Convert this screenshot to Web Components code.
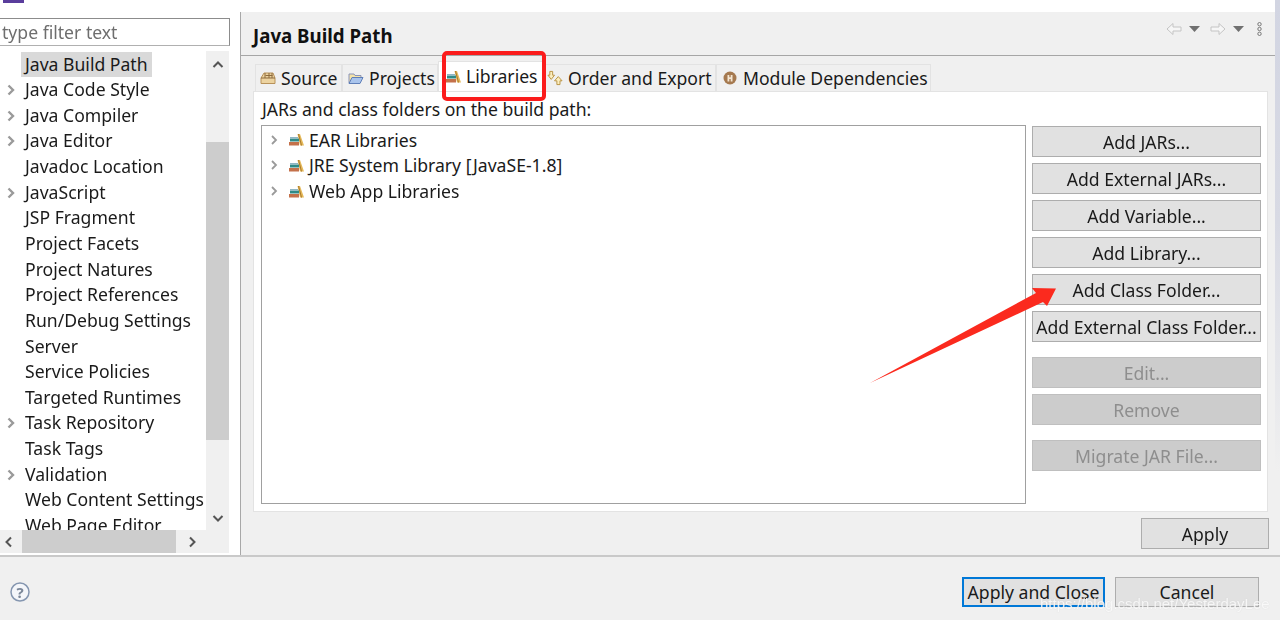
<!DOCTYPE html>
<html>
<head>
<meta charset="utf-8">
<title>Java Build Path</title>
<style>
html, body { margin: 0; padding: 0; background: #fff; }
body { width: 1280px; height: 620px; overflow: hidden; position: relative; font: 17.6px "Noto Sans", "Open Sans", sans-serif; color: #1a1a1a; }
</style>
</head>
<body>
<prefs-dialog>
  <prefs-sidebar slot="side">
    <tree-row>Java Build Path</tree-row>
    <tree-row arrow>Java Code Style</tree-row>
    <tree-row arrow>Java Compiler</tree-row>
    <tree-row arrow>Java Editor</tree-row>
    <tree-row>Javadoc Location</tree-row>
    <tree-row arrow>JavaScript</tree-row>
    <tree-row>JSP Fragment</tree-row>
    <tree-row>Project Facets</tree-row>
    <tree-row>Project Natures</tree-row>
    <tree-row>Project References</tree-row>
    <tree-row>Run/Debug Settings</tree-row>
    <tree-row>Server</tree-row>
    <tree-row>Service Policies</tree-row>
    <tree-row>Targeted Runtimes</tree-row>
    <tree-row arrow>Task Repository</tree-row>
    <tree-row>Task Tags</tree-row>
    <tree-row arrow>Validation</tree-row>
    <tree-row>Web Content Settings</tree-row>
    <tree-row>Web Page Editor</tree-row>
  </prefs-sidebar>
  <build-path-page slot="main"></build-path-page>
  <dialog-footer slot="footer"></dialog-footer>
</prefs-dialog>
<markup-layer></markup-layer>

<script>
const ICONS = {
  source: `<svg width="16" height="14" viewBox="0 0 16 14"><path d="M1 7 4 2h9l2 5v5.500H1z" fill="#ecd3a0" stroke="#b8925a"/><path d="M5 2v5M9 2v5M12 2v5M1 7h14M5.500 4.500h7" stroke="#8d6a3c" fill="none"/></svg>`,
  folder: `<svg width="16" height="14" viewBox="0 0 16 14"><path d="M1 12V3h5l1 1.500h6V7" fill="#f4e3a8" stroke="#8a94b8"/><path d="M1 12.500 4 6.500h11l-3 6z" fill="#a9c4ec" stroke="#5f7fb8"/></svg>`,
  lib: `<svg width="15" height="13" viewBox="0 0 15 13"><path d="M8.500 1 11 1 15 12.500H11z" fill="#e5b95a"/><path d="M9.500 1 12.500 12.500" stroke="#a9792c" fill="none"/><rect x="0" y="9" width="10" height="3.500" fill="#c4714a"/><rect x="1" y="5.500" width="9" height="3" fill="#2f8a86"/><rect x="1" y="4" width="8" height="1.500" fill="#8fb6c4"/></svg>`,
  order: `<svg width="17" height="16" viewBox="0 0 17 16"><path d="M3 1h3v4h2L4.500 9.500 1 5h2z" fill="#fbeec0" stroke="#b8913f"/><path d="M12 6.500 16 11h-2.200v4h-3.300v-4H8z" fill="#fbeec0" stroke="#b8913f"/></svg>`,
  module: `<svg width="14" height="14" viewBox="0 0 14 14"><circle cx="7" cy="7" r="6.500" fill="#a5794f"/><path d="M4.500 10.500V4h1.800v2.300h1.400V4h1.800v6.500H7.700V8H6.300v2.500z" fill="#f3e6d3"/></svg>`
};
const CHEVRON = (d, c, w) => `<svg width="12" height="12" viewBox="0 0 12 12"><path d="${d}" fill="none" stroke="${c}" stroke-width="${w}"/></svg>`;

class PrefsDialog extends HTMLElement {
  constructor() {
    super();
    this.attachShadow({ mode: 'open' }).innerHTML = `
      <style>
        :host { display: flex; flex-direction: column; width: 1280px; height: 620px; filter: blur(.35px); }
        .top { display: flex; flex: none; height: 555px; }
        .left { width: 1275px; flex: none; display: flex; flex-direction: column; }
        .strip { height: 12px; flex: none; }
        .strip i { display: block; width: 21px; height: 3px; margin-left: 3px; background: #5a3d9c; }
        .body { display: flex; height: 543px; flex: none; }
        .edge { width: 5px; flex: none; background: linear-gradient(#d2d5e2, #d8dae4 40%, #f0f0f0 85%); }
      </style>
      <div class="top">
        <div class="left">
          <div class="strip"><i></i></div>
          <div class="body">
            <slot name="side"></slot>
            <slot name="main"></slot>
          </div>
        </div>
        <div class="edge"></div>
      </div>
      <slot name="footer"></slot>`;
  }
}

class PrefsSidebar extends HTMLElement {
  constructor() {
    super();
    this.attachShadow({ mode: 'open' }).innerHTML = `
      <style>
        :host { display: block; width: 240px; flex: none; box-sizing: border-box; padding-top: 6px; }
        .filter { width: 230px; height: 28px; box-sizing: border-box; border: 1px solid #8c8c8c; border-bottom-color: #b0b0b0; border-left: none; padding-left: 2px; color: #6e6e6e; line-height: 27px; white-space: nowrap; }
        .grid { display: grid; grid-template-columns: 206px 23px; grid-template-rows: 479px 23px; margin-top: 5px; }
        .tree { overflow: hidden; padding-top: .5px; }
        .vbar { background: #f0f0f0; display: flex; flex-direction: column; align-items: center; }
        .vbar .cap { height: 28px; display: flex; align-items: center; justify-content: center; flex: none; }
        .vbar .pad { height: 63px; flex: none; }
        .vbar .thumb { height: 298px; width: 100%; background: #cdcdcd; flex: none; }
        .vbar .cap.down { margin-top: 71px; height: 13px; }
        .hbar { background: #f0f0f0; display: flex; align-items: center; }
        .hbar .cap { width: 22px; display: flex; justify-content: center; flex: none; }
        .hbar .cap.left { box-sizing: border-box; padding-right: 4px; }
        .hbar .thumb { width: 154px; height: 100%; background: #cdcdcd; flex: none; }
        .hbar .right { margin-left: 5px; }
        .corner { background: #f0f0f0; }
      </style>
      <div class="filter">type filter text</div>
      <div class="grid">
        <div class="tree"><slot></slot></div>
        <div class="vbar">
          <div class="cap">${CHEVRON('M1.500 8 6 3.500 10.500 8', '#555', 2)}</div>
          <div class="pad"></div>
          <div class="thumb"></div>
          <div class="cap down">${CHEVRON('M1.500 4 6 8.500 10.500 4', '#555', 2)}</div>
        </div>
        <div class="hbar">
          <div class="cap left">${CHEVRON('M8 1.500 3.500 6 8 10.500', '#555', 2)}</div>
          <div class="thumb"></div>
          <div class="cap right">${CHEVRON('M4 1.500 8.500 6 4 10.500', '#555', 2)}</div>
        </div>
        <div class="corner"></div>
      </div>`;
  }
}

class TreeRow extends HTMLElement {
  constructor() {
    super();
    const arrow = this.hasAttribute('arrow');
    const first = this.textContent === 'Java Build Path';
    this.attachShadow({ mode: 'open' }).innerHTML = `
      <style>
        :host { display: flex; align-items: center; height: 25.65px; white-space: nowrap; }
        .tw { width: 21px; flex: none; display: flex; justify-content: center; box-sizing: border-box; }
        .label { padding: 0 4px; ${first ? 'background:#d9d9d9;' : ''} line-height: 25.65px; }
      </style>
      <div class="tw">${arrow ? CHEVRON('M3.500 1.500 8 6 3.500 10.500', '#9a9a9a', 2.4) : ''}</div>
      <div class="label"><slot></slot></div>`;
  }
}

class BuildPathPage extends HTMLElement {
  constructor() {
    super();
    this.attachShadow({ mode: 'open' }).innerHTML = `
      <style>
        :host { display: flex; flex-direction: column; width: 1035px; flex: none; background: #f0f0f0; border-left: 1px solid #a8a8a8; box-sizing: border-box; }
        .head { height: 44px; flex: none; box-sizing: border-box; border-bottom: 1.500px solid #a6a6a6; display: flex; align-items: center; padding: 4px 0 0 12px; }
        h1 { margin: 0; font-size: 18.7px; font-weight: 700; color: #111; flex: 1; }
        .tools { display: flex; align-items: center; margin-right: 13.500px; margin-top: -14px; }
        .content { flex: 1; padding: 4px 7px 0 12px; display: flex; flex-direction: column; }
        .tabs { display: flex; align-items: flex-end; height: 30px; flex: none; margin: 1px 0 0 2px; }
        .panel { background: #fff; border: 1px solid #e3e3e3; box-sizing: border-box; height: 421px; flex: none; padding: 0 6px 0 7px; display: grid; grid-template-columns: 765px 229px; column-gap: 6px; grid-template-rows: 33px 1fr; }
        .label { grid-column: 1 / 3; padding-left: 1px; line-height: 34px; }
        .list { border: 1px solid #a0a0a0; box-sizing: border-box; height: 379px; padding-top: 1px; }
        .btns { display: flex; flex-direction: column; padding-top: 1px; gap: 6px; }
        .apply { display: flex; justify-content: flex-end; margin: 6px -1px 0 0; }
      </style>
      <div class="head">
        <h1>Java Build Path</h1>
        <div class="tools">
          <svg width="16" height="14" viewBox="0 0 16 14" style="margin-right:7px"><path d="M1 7 7 1.500V5h8v4H7v3.500z" fill="#f6f6f6" stroke="#c4c4c4"/></svg>
          <svg width="11" height="6" viewBox="0 0 11 6" style="margin-right:10px"><path d="M0 0h11L5.500 6z" fill="#707070"/></svg>
          <svg width="16" height="14" viewBox="0 0 16 14" style="margin-right:7px"><path d="M15 7 9 1.500V5H1v4h8v3.500z" fill="#f6f6f6" stroke="#c4c4c4"/></svg>
          <svg width="11" height="6" viewBox="0 0 11 6" style="margin-right:12.500px"><path d="M0 0h11L5.500 6z" fill="#707070"/></svg>
          <svg width="5" height="14" viewBox="0 0 5 14"><g fill="none" stroke="#777"><circle cx="2.500" cy="2.200" r="1.700"/><circle cx="2.500" cy="7" r="1.700"/><circle cx="2.500" cy="11.800" r="1.700"/></g></svg>
        </div>
      </div>
      <div class="content">
        <div class="tabs">
          <tab-item icon="source" w="87" pad="4">Source</tab-item>
          <tab-item icon="folder" w="96" pad="5">Projects</tab-item>
          <tab-item icon="lib" w="107" pad="6" selected>Libraries</tab-item>
          <tab-item icon="order" w="171" pad="1">Order and Export</tab-item>
          <tab-item icon="module" w="215" pad="5">Module Dependencies</tab-item>
        </div>
        <div class="panel">
          <div class="label">JARs and class folders on the build path:</div>
          <div class="list">
            <lib-row>EAR Libraries</lib-row>
            <lib-row>JRE System Library [JavaSE-1.8]</lib-row>
            <lib-row>Web App Libraries</lib-row>
          </div>
          <div class="btns">
            <ec-button>Add JARs...</ec-button>
            <ec-button>Add External JARs...</ec-button>
            <ec-button>Add Variable...</ec-button>
            <ec-button>Add Library...</ec-button>
            <ec-button>Add Class Folder...</ec-button>
            <ec-button>Add External Class Folder...</ec-button>
            <ec-button disabled class="sep">Edit...</ec-button>
            <ec-button disabled>Remove</ec-button>
            <ec-button disabled class="sep">Migrate JAR File...</ec-button>
          </div>
        </div>
        <div class="apply"><ec-button style="width:128px">Apply</ec-button></div>
      </div>`;
  }
}

class TabItem extends HTMLElement {
  constructor() {
    super();
    const sel = this.hasAttribute('selected');
    this.attachShadow({ mode: 'open' }).innerHTML = `
      <style>
        :host { display: flex; align-items: center; box-sizing: border-box; width: ${this.getAttribute('w')}px; height: ${sel ? 30 : 27}px; padding-left: ${this.getAttribute('pad')}px; gap: 5px; white-space: nowrap; background: ${sel ? '#fff' : '#f0f0f0'}; border: 1px solid #e3e3e3; border-bottom: none; ${sel ? 'padding-bottom: 1px;' : ''} }
        .ic { width: 16px; flex: none; display: flex; justify-content: center; }
      </style>
      <span class="ic">${ICONS[this.getAttribute('icon')]}</span><slot></slot>`;
  }
}

class LibRow extends HTMLElement {
  constructor() {
    super();
    this.attachShadow({ mode: 'open' }).innerHTML = `
      <style>
        :host { display: flex; align-items: center; height: 25.65px; white-space: nowrap; }
        .tw { width: 27px; flex: none; display: flex; justify-content: center; padding-right: 4px; box-sizing: border-box; }
        .ic { flex: none; width: 20px; display: flex; }
      </style>
      <div class="tw">${CHEVRON('M4 2 8 6 4 10', '#9a9a9a', 1.800)}</div>
      <div class="ic">${ICONS.lib}</div><slot></slot>`;
  }
}

class EcButton extends HTMLElement {
  constructor() {
    super();
    this.attachShadow({ mode: 'open' }).innerHTML = `
      <style>
        :host { display: flex; align-items: center; justify-content: center; box-sizing: border-box; height: 31px; background: #e1e1e1; border: 1.500px solid #adadad; white-space: nowrap; color: #1a1a1a; flex: none; }
        :host([disabled]) { background: #cccccc; border-color: #bfbfbf; color: #8e8e8e; }
        :host([default]) { border: 2px solid #0078d7; }
        :host(.sep) { margin-top: 9px; }
      </style>
      <slot></slot>`;
  }
}

class DialogFooter extends HTMLElement {
  constructor() {
    super();
    this.attachShadow({ mode: 'open' }).innerHTML = `
      <style>
        :host { display: flex; box-sizing: border-box; flex: 1; align-items: flex-start; background: #f0f0f0; border-top: 2px solid #c9c9c9; padding: 20px 21px 0 10px; }
        .help { margin: 5px auto 0 0; }
        ec-button { height: 30px; }
      </style>
      <svg class="help" width="20" height="20" viewBox="0 0 20 20">
        <circle cx="10" cy="10" r="9" fill="#f4f6fa" stroke="#8596b0" stroke-width="1.500"/>
        <text x="10" y="15.500" text-anchor="middle" font-family="Noto Sans, sans-serif" font-size="15" font-weight="700" fill="#7b8799">?</text>
      </svg>
      <ec-button default style="width:143px;margin-right:10px">Apply and Close</ec-button>
      <ec-button style="width:144px">Cancel</ec-button>`;
  }
}

class MarkupLayer extends HTMLElement {
  constructor() {
    super();
    this.attachShadow({ mode: 'open' }).innerHTML = `
      <style>
        :host { display: block; position: absolute; left: 0; top: 0; width: 1280px; height: 620px; pointer-events: none; }
        .box { position: absolute; left: 442px; top: 51px; width: 104px; height: 50px; box-sizing: border-box; border: 4.500px solid #fb1c1c; border-radius: 5px; }
        svg { position: absolute; left: 0; top: 0; }
        .mark { position: absolute; left: 1040px; top: 595px; font: 15px "Liberation Sans", sans-serif; color: rgba(255,255,255,.8); text-shadow: 0 0 1px rgba(190,190,190,.5); white-space: nowrap; }
      </style>
      <div class="box"></div>
      <svg width="1280" height="620"><path d="M870 383 1036 293 1032 288 1056 288.500 1047 306 1043 302z" fill="#fb2a1e"/></svg>
      <div class="mark">https://blog.csdn.net/YesterdayLee</div>`;
  }
}

customElements.define('prefs-dialog', PrefsDialog);
customElements.define('prefs-sidebar', PrefsSidebar);
customElements.define('tree-row', TreeRow);
customElements.define('build-path-page', BuildPathPage);
customElements.define('tab-item', TabItem);
customElements.define('lib-row', LibRow);
customElements.define('ec-button', EcButton);
customElements.define('dialog-footer', DialogFooter);
customElements.define('markup-layer', MarkupLayer);
</script>
</body>
</html>
